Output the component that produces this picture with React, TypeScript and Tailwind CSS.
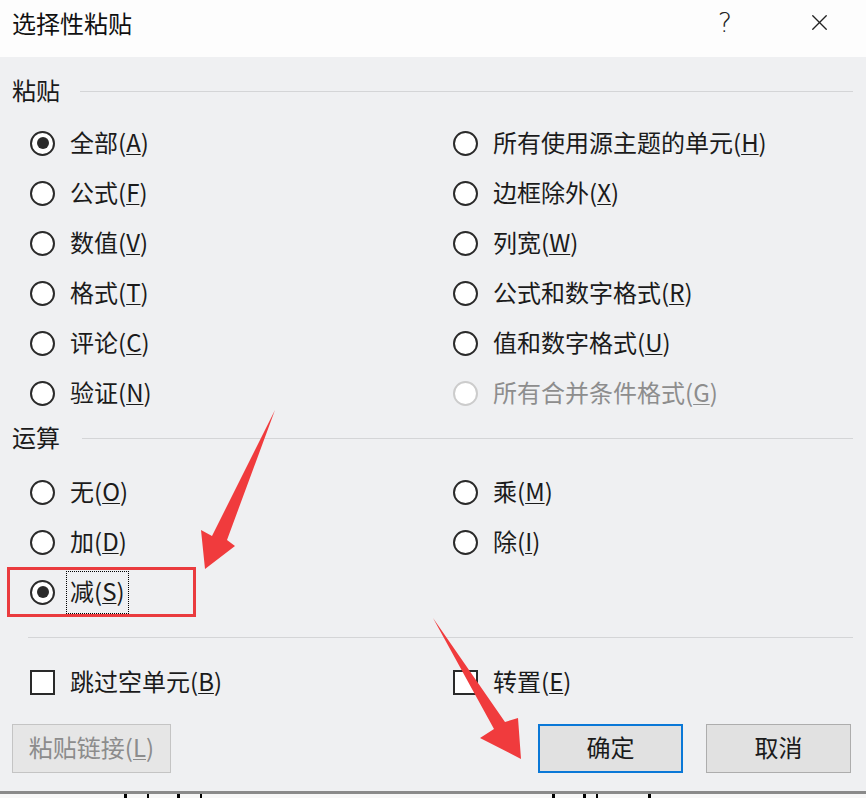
import { X } from 'lucide-react'

type Opt = { label: string; key: string; checked?: boolean; disabled?: boolean; focus?: boolean }

const pasteLeft: Opt[] = [
  { label: '全部', key: 'A', checked: true },
  { label: '公式', key: 'F' },
  { label: '数值', key: 'V' },
  { label: '格式', key: 'T' },
  { label: '评论', key: 'C' },
  { label: '验证', key: 'N' },
]

const pasteRight: Opt[] = [
  { label: '所有使用源主题的单元', key: 'H' },
  { label: '边框除外', key: 'X' },
  { label: '列宽', key: 'W' },
  { label: '公式和数字格式', key: 'R' },
  { label: '值和数字格式', key: 'U' },
  { label: '所有合并条件格式', key: 'G', disabled: true },
]

const opsLeft: Opt[] = [
  { label: '无', key: 'O' },
  { label: '加', key: 'D' },
  { label: '减', key: 'S', checked: true, focus: true },
]

const opsRight: Opt[] = [
  { label: '乘', key: 'M' },
  { label: '除', key: 'I' },
]

function Label({ opt }: { opt: Opt }) {
  return (
    <span
      className={`flex items-center h-[41px] px-[3px] -mx-[3px] pb-[3px] ${
        opt.focus ? 'outline outline-1 outline-dotted outline-black' : ''
      } ${opt.disabled ? 'text-[#8d8d8d]' : 'text-[#1b1b1b]'}`}
    >
      {opt.label}(<span className="underline underline-offset-[2px] decoration-1">{opt.key}</span>)
    </span>
  )
}

function Radio({ opt }: { opt: Opt }) {
  return (
    <div className="h-[50px] flex items-center gap-[15px]">
      <span
        className={`w-[25px] h-[25px] rounded-full bg-white border-2 flex items-center justify-center shrink-0 ${
          opt.disabled ? 'border-[#cccccc]' : 'border-[#2a2a2a]'
        }`}
      >
        {opt.checked && <span className="w-[12px] h-[12px] rounded-full bg-[#2a2a2a]" />}
      </span>
      <Label opt={opt} />
    </div>
  )
}

function Check({ label, k }: { label: string; k: string }) {
  return (
    <div className="h-[50px] flex items-center gap-[15px]">
      <span className="w-[25px] h-[25px] bg-white border-2 border-[#2a2a2a] shrink-0" />
      <span className="text-[#1b1b1b] pb-[3px]">
        {label}(<span className="underline underline-offset-[2px] decoration-1">{k}</span>)
      </span>
    </div>
  )
}

function Section({ title, lineLeft }: { title: string; lineLeft: string }) {
  return (
    <div className="h-[34px] flex items-center pl-[12px] pr-[13px]">
      <span className={`text-[#1b1b1b] pb-[3px] ${lineLeft}`}>{title}</span>
      <div className="flex-1 h-px bg-[#d4d5d7]" />
    </div>
  )
}

function Column({ items }: { items: Opt[] }) {
  return (
    <div className="flex flex-col">
      {items.map((o) => (
        <Radio key={o.key} opt={o} />
      ))}
    </div>
  )
}

export default function App() {
  return (
    <div className="relative w-[866px] h-[798px] overflow-hidden bg-[#eff0f2] font-['Noto_Sans_CJK_SC',sans-serif] text-[24px] leading-none">
      {/* Title bar */}
      <div className="h-[57px] bg-[#fdfdfd] flex items-center pl-[12px]">
        <span className="text-[24px] text-[#111] -mt-[12px]">选择性粘贴</span>
        <div className="flex-1" />
        <span className="text-[27px] text-[#222] -mt-[12px] mr-[74px] font-['DejaVu_Sans',sans-serif] font-extralight">?</span>
        <X size={27} strokeWidth={1.2} className="text-[#222] mr-[33px] -mt-[12px]" />
      </div>

      {/* Paste */}
      <div className="pt-[17px]">
        <Section title="粘贴" lineLeft="mr-[20px]" />
        <div className="grid grid-cols-[423px_1fr] pl-[30px] mt-[10px]">
          <Column items={pasteLeft} />
          <Column items={pasteRight} />
        </div>
      </div>

      {/* Operation */}
      <div className="mt-[3px]">
        <Section title="运算" lineLeft="mr-[22px]" />
        <div className="grid grid-cols-[423px_1fr] pl-[30px] mt-[12px]">
          <Column items={opsLeft} />
          <Column items={opsRight} />
        </div>
      </div>

      <div className="ml-[28px] mr-[13px] mt-[20px] h-px bg-[#d4d5d7]" />

      <div className="grid grid-cols-[423px_1fr] pl-[30px] mt-[19px]">
        <Check label="跳过空单元" k="B" />
        <Check label="转置" k="E" />
      </div>

      {/* Buttons */}
      <div className="flex items-center mt-[17px] pl-[12px] pr-[15px]">
        <button className="w-[159px] h-[49px] pb-[3px] bg-[#e6e6e6] border border-[#c4c4c4] text-[#8c8c8c] flex items-center justify-center">
          粘贴链接(<span className="underline underline-offset-[2px] decoration-1">L</span>)
        </button>
        <div className="flex-1" />
        <button className="w-[145px] h-[49px] pb-[3px] bg-[#e1e1e1] border-2 border-[#0a78d7] text-[#1b1b1b] flex items-center justify-center">
          确定
        </button>
        <button className="w-[145px] h-[49px] pb-[3px] ml-[23px] bg-[#e1e1e1] border border-[#adadad] text-[#1b1b1b] flex items-center justify-center">
          取消
        </button>
      </div>

      {/* Sheet beneath */}
      <div className="absolute left-0 right-0 top-[791px] h-[7px] bg-[#f7f7f7] border-t-[3px] border-[#8a8a8a] flex">
        <div className="ml-[124px] w-[3px] bg-black" />
        <div className="ml-[20px] w-[2px] bg-black" />
        <div className="ml-[28px] w-[3px] bg-black" />
        <div className="ml-[20px] w-[2px] bg-black" />
        <div className="ml-[350px] w-[3px] bg-black" />
        <div className="ml-[28px] w-[3px] bg-black" />
        <div className="ml-[10px] w-[2px] bg-black" />
        <div className="ml-[50px] w-[3px] bg-black" />
      </div>

      {/* Annotation box */}
      <div className="absolute left-[7px] top-[567px] w-[189px] h-[50px] border-[3px] border-[#ea3b3e]" />

      {/* Annotation arrows */}
      <svg className="absolute inset-0 pointer-events-none" width="866" height="798" viewBox="0 0 866 798">
        <polygon points="275,410 227,540 235,546 205,569 201,530 212,536" fill="#f03b3d" />
        <polygon points="433,618 505,722 518,718 521,759 480,738 494,729" fill="#f03b3d" />
      </svg>
    </div>
  )
}
